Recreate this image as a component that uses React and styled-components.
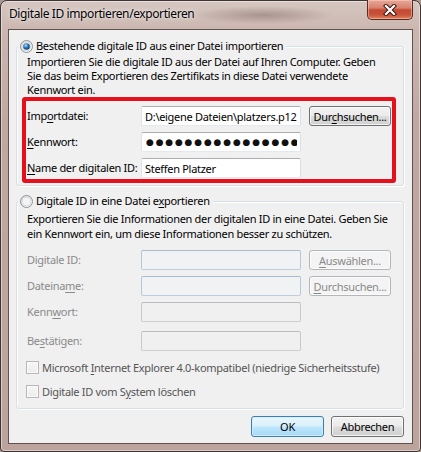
import React from "react";
import styled, { createGlobalStyle, css } from "styled-components";

const Global = createGlobalStyle`
  html, body { margin: 0; padding: 0; background: #a89690; }
  body {
    font-family: "Noto Sans", "Open Sans", sans-serif;
    font-size: 11px;
    letter-spacing: -0.3px;
    -webkit-font-smoothing: antialiased;
  }
  * { box-sizing: border-box; }
`;

const Window = styled.div`
  width: 421px;
  height: 452px;
  display: flex;
  flex-direction: column;
  padding: 0 7px 7px;
  border: 1px solid #3e3431;
  border-radius: 7px 7px 4px 4px;
  background:
    radial-gradient(ellipse 70px 9px at 262px 14px, rgba(95, 72, 68, 0.35), rgba(95, 72, 68, 0) 100%),
    linear-gradient(180deg, #d6c6c1 0px, #cbb7b0 28px, #c0a8a0 120px, #bca39b 100%);
  box-shadow: inset 0 0 0 1px rgba(255, 255, 255, 0.45);
`;

const TitleBar = styled.div`
  flex: none;
  height: 28px;
  display: flex;
  align-items: flex-start;
  justify-content: space-between;
`;

const Title = styled.div`
  margin: 5px 0 0 1px;
  font-size: 12px;
  letter-spacing: -0.4px;
  line-height: 16px;
  white-space: nowrap;
  color: #000;
  text-shadow: 0 0 6px rgba(255, 255, 255, 0.9), 0 0 2px rgba(255, 255, 255, 0.7);
`;

const CloseButton = styled.div`
  width: 46px;
  height: 20px;
  margin-top: -1px;
  display: flex;
  align-items: center;
  justify-content: center;
  border: 1px solid #5b2a22;
  border-top: none;
  border-radius: 0 0 5px 5px;
  background: linear-gradient(180deg, #e7a898 0%, #d7826f 42%, #c54a33 52%, #c8533a 78%, #e0835c 100%);
  box-shadow: inset 0 0 0 1px rgba(255, 220, 210, 0.45);
`;

const Client = styled.div`
  flex: 1;
  min-height: 0;
  display: flex;
  flex-direction: column;
  padding: 8px 8px 6px 7px;
  background: #f0f0f0;
  border: 1px solid #5e5350;
`;

const Group = styled.fieldset`
  flex: none;
  margin: ${(p) => (p.$second ? "7px 0 0" : "0")};
  padding: 0 12px ${(p) => (p.$second ? "9px" : "2px")} 10px;
  border: 1px solid #d5dfe5;
  border-radius: 3px;
  box-shadow: inset 1px 1px 0 #fff, 1px 1px 0 #fff;
  min-width: 0;
`;

const Legend = styled.legend`
  display: flex;
  align-items: center;
  gap: 3px;
  margin-left: -9px;
  padding: 0 3px 0 2px;
  height: 16px;
  line-height: 16px;
  white-space: nowrap;
  background: #f0f0f0;
  color: #000;
`;

const Description = styled.p`
  margin: ${(p) => (p.$second ? "2px 0 0" : "1px 0 0")};
  line-height: ${(p) => (p.$second ? "15px" : "14px")};
  white-space: nowrap;
  color: #000;
`;

const Highlight = styled.div`
  margin: 0 -5px;
  padding: 5px 1px 1px;
  border: 4px solid #e5101c;
  border-radius: 3px;
  display: flex;
  flex-direction: column;
  gap: 6px;
`;

const Fields = styled.div`
  margin-top: 9px;
  display: flex;
  flex-direction: column;
  gap: 6px;
`;

const FieldRow = styled.div`
  display: grid;
  grid-template-columns: 106px 160px 82px;
  column-gap: 8px;
  align-items: center;
  height: 20px;
  margin-top: ${(p) => (p.$extraTop ? "3px" : "0")};
`;

const FieldLabel = styled.label`
  line-height: 16px;
  white-space: nowrap;
  color: ${(p) => (p.$disabled ? "#8a8a8a" : "#000")};
`;

const TextBox = styled.input`
  width: 160px;
  height: 20px;
  margin: 0;
  padding: 0 3px;
  font: inherit;
  font-size: 11px;
  letter-spacing: -0.3px;
  color: #000;
  outline: none;
  border-radius: 2px;
  border: 1px solid;
  ${(p) =>
    p.$variant === "blue"
      ? css`
          background: #f1f2f4;
          border-color: #a7bbd0 #b5c8db #bccde0 #b5c8db;
        `
      : p.$variant === "off"
      ? css`
          background: #f0f0f0;
          border-color: #bcbcbc #c9c9c9 #cfcfcf #c9c9c9;
        `
      : css`
          background: #fff;
          border-color: #abadb3 #dbdfe6 #e3e9ef #e2e3ea;
        `}
`;

const PasswordBox = styled(TextBox)`
  font-family: "DejaVu Sans", sans-serif;
  font-size: 9px;
  letter-spacing: 1.8px;
  padding-left: 4px;
  color: #111;
`;

const PushButton = styled.button`
  height: ${(p) => (p.$tall ? "21px" : "20px")};
  width: ${(p) => p.$w || 82}px;
  margin: 0;
  padding: 0;
  font: inherit;
  font-size: 11px;
  letter-spacing: -0.3px;
  white-space: nowrap;
  border-radius: 3px;
  border: 1px solid #707070;
  color: #000;
  background: linear-gradient(180deg, #f2f2f2 0%, #ebebeb 48%, #dddddd 52%, #cfcfcf 100%);
  box-shadow: inset 0 0 0 1px rgba(255, 255, 255, 0.75);
  ${(p) =>
    p.$disabled &&
    css`
      border-color: #b3b7ba;
      color: #8a8a8a;
      background: #f4f4f4;
      box-shadow: inset 0 0 0 1px #fbfbfb;
    `}
  ${(p) =>
    p.$default &&
    css`
      border-color: #3c7fb1;
      background: linear-gradient(180deg, #eaf6fd 0%, #d9f0fc 48%, #bee6fd 52%, #a7d9f5 100%);
      box-shadow: inset 0 0 0 1px rgba(210, 240, 255, 0.9);
    `}
`;

const Key = styled.span`
  text-decoration: underline;
  text-underline-offset: 2px;
`;

const CheckList = styled.div`
  margin-top: 8px;
  display: flex;
  flex-direction: column;
  gap: 8px;
`;

const CheckRow = styled.label`
  display: flex;
  align-items: center;
  gap: 3px;
  height: 16px;
  margin-left: -1px;
  color: #555;
  white-space: nowrap;
`;

const CheckBox = styled.span`
  flex: none;
  width: 13px;
  height: 13px;
  border: 1px solid #b8b8b8;
  background: linear-gradient(180deg, #f6f6f6, #ececec);
  box-shadow: inset 0 0 0 1px #fbfbfb;
`;

const Footer = styled.div`
  flex: none;
  margin-top: 7px;
  display: flex;
  justify-content: flex-end;
  gap: 7px;
`;

function CloseGlyph() {
  return (
    <svg width="14" height="12" viewBox="0 0 14 12">
      <path d="M3 2 L11 10 M11 2 L3 10" stroke="#3b1710" strokeWidth="4.2" strokeLinecap="square" />
      <path d="M3 2 L11 10 M11 2 L3 10" stroke="#ffffff" strokeWidth="2.2" strokeLinecap="square" />
    </svg>
  );
}

function Radio({ checked, id }) {
  return (
    <svg width="13" height="13" viewBox="0 0 13 13">
      <defs>
        <linearGradient id={`ring-${id}`} x1="0" y1="0" x2="1" y2="1">
          <stop offset="0" stopColor="#dcdcdc" />
          <stop offset="1" stopColor="#ffffff" />
        </linearGradient>
        <radialGradient id={`dot-${id}`} cx="0.4" cy="0.35" r="0.7">
          <stop offset="0" stopColor="#c5e6fb" />
          <stop offset="0.45" stopColor="#2d7ac0" />
          <stop offset="1" stopColor="#0e3558" />
        </radialGradient>
      </defs>
      <circle cx="6.5" cy="6.5" r="6" fill={`url(#ring-${id})`} stroke="#8c9399" strokeWidth="1" />
      <circle cx="6.5" cy="6.5" r="4.4" fill="#f4f4f4" stroke="#d0d0d0" strokeWidth="0.8" />
      {checked && <circle cx="6.5" cy="6.5" r="3.3" fill={`url(#dot-${id})`} />}
    </svg>
  );
}

export default function App() {
  return (
    <>
      <Global />
      <Window>
        <TitleBar>
          <Title>Digitale ID importieren/exportieren</Title>
          <CloseButton>
            <CloseGlyph />
          </CloseButton>
        </TitleBar>
        <Client>
          <Group>
            <Legend>
              <Radio checked id="imp" />
              <span>
                <Key>B</Key>estehende digitale ID aus einer Datei importieren
              </span>
            </Legend>
            <Description>
              Importieren Sie die digitale ID aus der Datei auf Ihren Computer. Geben
              <br />
              Sie das beim Exportieren des Zertifikats in diese Datei verwendete
              <br />
              Kennwort ein.
            </Description>
            <Highlight>
              <FieldRow>
                <FieldLabel>
                  Imp<Key>o</Key>rtdatei:
                </FieldLabel>
                <TextBox readOnly value={"D:\\eigene Dateien\\platzers.p12"} />
                <PushButton>
                  Dur<Key>c</Key>hsuchen...
                </PushButton>
              </FieldRow>
              <FieldRow>
                <FieldLabel>
                  <Key>K</Key>ennwort:
                </FieldLabel>
                <PasswordBox readOnly value={"●".repeat(20)} />
              </FieldRow>
              <FieldRow>
                <FieldLabel>
                  <Key>N</Key>ame der digitalen ID:
                </FieldLabel>
                <TextBox readOnly value="Steffen Platzer" />
              </FieldRow>
            </Highlight>
          </Group>

          <Group $second>
            <Legend>
              <Radio id="exp" />
              <span>
                Digitale ID in eine Datei e<Key>x</Key>portieren
              </span>
            </Legend>
            <Description $second>
              Exportieren Sie die Informationen der digitalen ID in eine Datei. Geben Sie
              <br />
              ein Kennwort ein, um diese Informationen besser zu schützen.
            </Description>
            <Fields>
              <FieldRow>
                <FieldLabel $disabled>Digitale ID:</FieldLabel>
                <TextBox $variant="blue" disabled />
                <PushButton $disabled>
                  <Key>A</Key>uswählen...
                </PushButton>
              </FieldRow>
              <FieldRow>
                <FieldLabel $disabled>
                  Dateina<Key>m</Key>e:
                </FieldLabel>
                <TextBox $variant="blue" disabled />
                <PushButton $disabled>
                  <Key>D</Key>urchsuchen...
                </PushButton>
              </FieldRow>
              <FieldRow>
                <FieldLabel $disabled>
                  Kenn<Key>w</Key>ort:
                </FieldLabel>
                <TextBox $variant="off" disabled />
              </FieldRow>
              <FieldRow $extraTop>
                <FieldLabel $disabled>
                  Be<Key>s</Key>tätigen:
                </FieldLabel>
                <TextBox $variant="off" disabled />
              </FieldRow>
            </Fields>
            <CheckList>
              <CheckRow>
                <CheckBox />
                <span>
                  Microsoft <Key>I</Key>nternet Explorer 4.0-kompatibel (niedrige Sicherheitsstufe)
                </span>
              </CheckRow>
              <CheckRow>
                <CheckBox />
                <span>
                  Digitale ID vom S<Key>y</Key>stem löschen
                </span>
              </CheckRow>
            </CheckList>
          </Group>

          <Footer>
            <PushButton $default $tall $w={73}>
              OK
            </PushButton>
            <PushButton $tall $w={73}>
              Abbrechen
            </PushButton>
          </Footer>
        </Client>
      </Window>
    </>
  );
}
